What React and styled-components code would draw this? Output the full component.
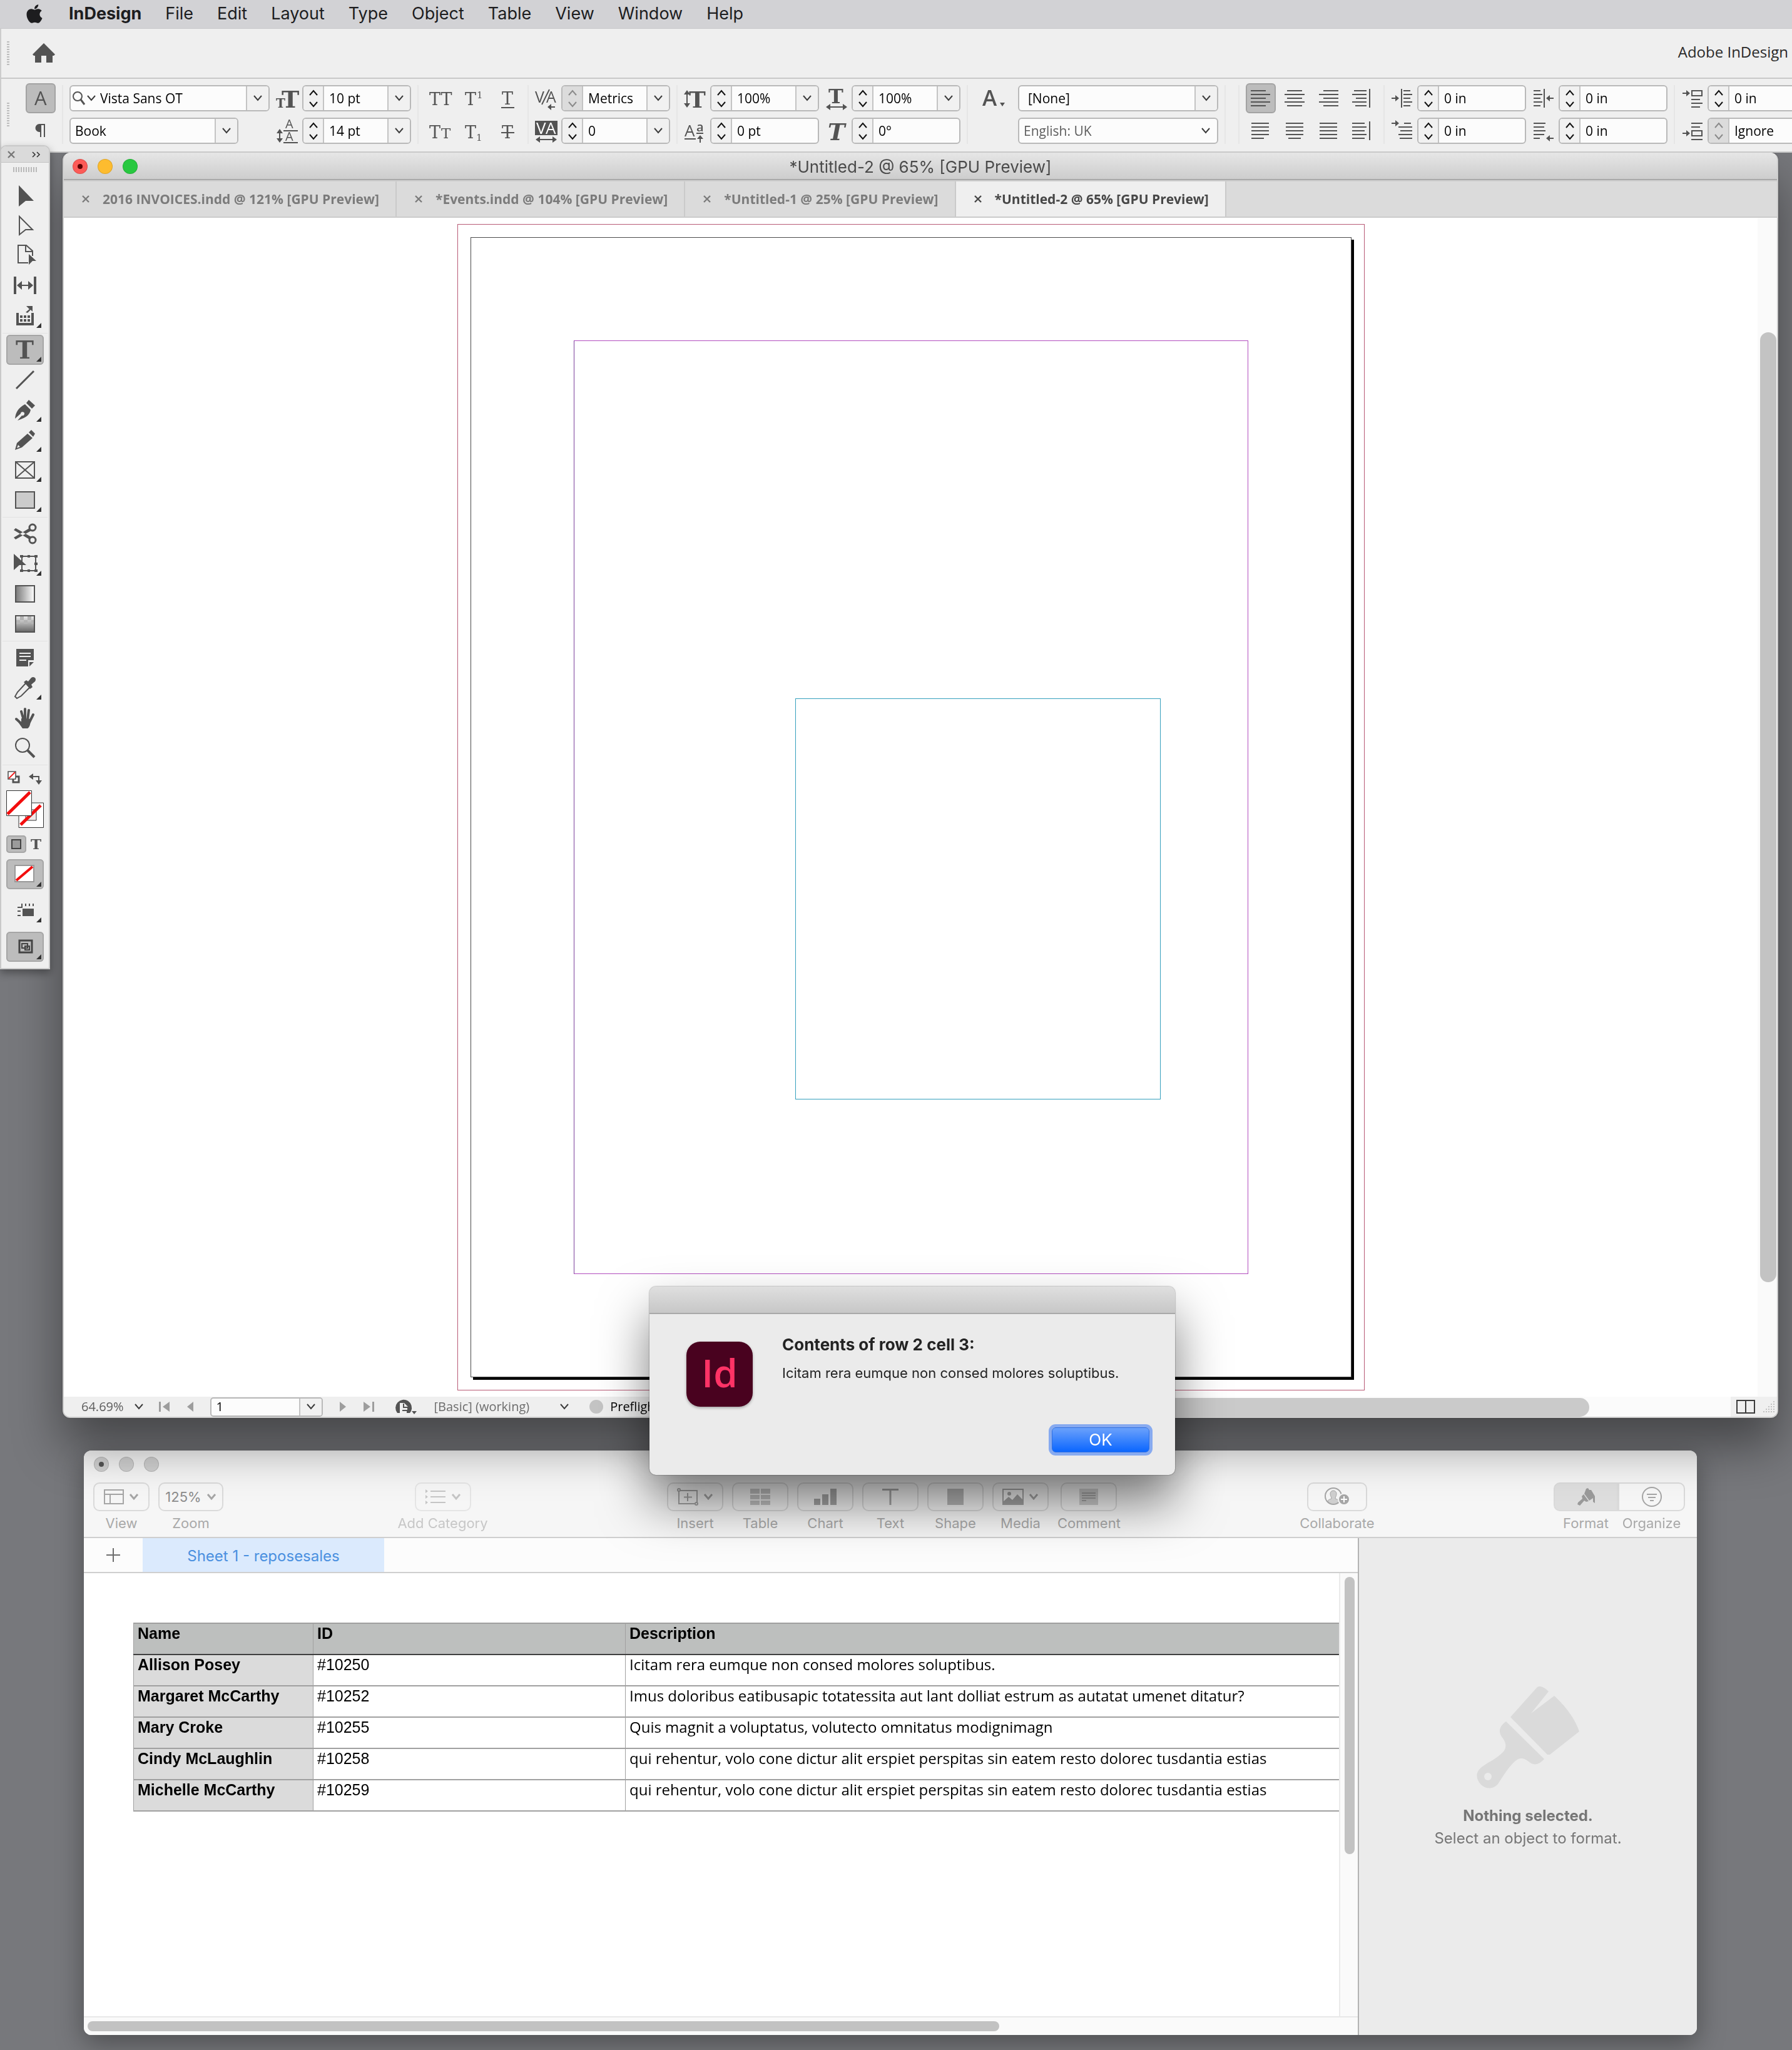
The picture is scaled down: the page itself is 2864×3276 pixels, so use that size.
import React from 'react';
import styled, { createGlobalStyle, css } from 'styled-components';
import { FaApple } from 'react-icons/fa';

const system = 'Inter, "Liberation Sans", sans-serif';
const panelFont = '"Open Sans", "Noto Sans", sans-serif';
const ink = '#535353';

const GlobalStyle = createGlobalStyle`
  *, *::before, *::after { box-sizing: border-box; }
  body { margin: 0; background: #77787c; font-family: ${system}; }
  button, input, select { font: inherit; color: inherit; margin: 0; }
  button { padding: 0; border: 0; background: none; }
  svg { display: block; flex: none; overflow: visible; }
`;

/* ---------- shared bits ---------- */

const Chevron = ({ up, size = 16, color = '#3c3c3c', weight = 2 }) => (
  <svg width={size} height={size * 0.75} viewBox="0 0 16 12" fill="none" stroke={color} strokeWidth={weight}>
    <path d={up ? 'M2 10L8 3L14 10' : 'M2 2L8 9L14 2'} />
  </svg>
);

const Serif = ({ x, y, size, bold, italic, children }) => (
  <text x={x} y={y} fontSize={size} fill={ink} fontFamily="DejaVu Serif, serif"
    fontWeight={bold ? 700 : 400} fontStyle={italic ? 'italic' : 'normal'}>{children}</text>
);

const Sans = ({ x, y, size, fill = ink, weight = 400, children }) => (
  <text x={x} y={y} fontSize={size} fill={fill} fontWeight={weight} fontFamily="Open Sans, sans-serif">{children}</text>
);

const Icon = ({ w = 36, h = 42, children }) => (
  <svg width={w} height={h} viewBox={`0 0 ${w} ${h}`} fill="none" stroke="none">{children}</svg>
);

const Lines = ({ rows }) => (
  <g stroke={ink} strokeWidth="2">
    {rows.map(([x1, x2, y]) => <path key={y} d={`M${x1} ${y}H${x2}`} />)}
  </g>
);

const ArrowRight = ({ x, y }) => (
  <path d={`M${x} ${y - 1}h6v-4l6 5l-6 5v-4h-6z`} fill={ink} />
);

const ArrowLeft = ({ x, y }) => (
  <path d={`M${x + 12} ${y - 1}h-6v-4l-6 5l6 5v-4h6z`} fill={ink} />
);

const UpDown = ({ x, y1, y2 }) => (
  <path d={`M${x} ${y1}l5 7h-4v${y2 - y1 - 14}h4l-5 7l-5 -7h4v-${y2 - y1 - 14}h-4z`} fill={ink} />
);

const LeftRight = ({ y }) => (
  <path d={`M1 ${y}l7 -5v4h20v-4l7 5l-7 5v-4h-20v4z`} fill={ink} />
);

/* ---------- menu bar and control panel ---------- */

const Desktop = styled.div`
  position: relative;
  display: flex;
  flex-direction: column;
  min-height: 100vh;
  overflow: hidden;
  background: #77787c;
`;

const MenuBar = styled.nav`
  display: flex;
  align-items: center;
  gap: 38px;
  height: 46px;
  padding: 0 38px 2px;
  border-bottom: 1px solid #c8c8cb;
  background: #d2d2d5;
  color: #1d1d1f;
`;

const MenuItem = styled.button`
  font-size: 27px;
  line-height: 32px;
  font-weight: ${props => (props.$bold ? 700 : 400)};
`;

const AppBar = styled.header`
  display: flex;
  align-items: center;
  height: 80px;
  padding: 0 6px 0 9px;
  border-left: 2px solid #ccc;
  border-bottom: 2px solid #c9c9c9;
  background: #efefef;
  font: 24px ${panelFont};
  color: #2a2a2a;
`;

const AppName = styled.span`
  margin-left: auto;
  padding-bottom: 6px;
`;

const Grip = styled.span`
  flex: none;
  width: 4px;
  height: 38px;
  background: repeating-linear-gradient(#bdbdbd 0 2px, transparent 2px 4px);
`;

const HomeButton = styled.button`
  margin-left: 37px;
`;

const Panel = styled.section`
  position: relative;
  z-index: 3;
  display: flex;
  align-items: center;
  gap: 10px;
  height: 118px;
  padding: 0 0 2px 9px;
  border-left: 2px solid #ccc;
  border-bottom: 2px solid #c9c9c9;
  background: #efefef;
  overflow: hidden;
  font: 21px/26px ${panelFont};
  color: #000;
`;

const Divider = styled.span`
  flex: none;
  width: 2px;
  height: 94px;
  margin-left: ${props => (props.$wide ? 10 : 0)}px;
  background: #e6e6e6;
`;

const Group = styled.div`
  flex: none;
  display: grid;
  grid-template-columns: ${props => props.$cols};
  grid-template-rows: 42px 42px;
  gap: 10px ${props => props.$gap || 6}px;
  align-items: center;
  justify-items: ${props => props.$justify || 'start'};
  padding: 0 ${props => props.$pad || 0}px;
`;

const ModeGroup = styled(Group)`
  padding-left: 16px;
`;

const IconButton = styled.button`
  display: grid;
  place-items: center;
  width: 48px;
  height: 48px;
  border: 2px solid transparent;
  border-radius: 6px;
  ${props => props.$on && css`
    border-color: #a3a3a3;
    background: #bcbcbc;
  `}
`;

const SmallIconButton = styled(IconButton)`
  width: 38px;
  height: 42px;
`;

const FieldBox = styled.div`
  display: flex;
  width: ${props => props.$width || 174}px;
  height: 42px;
  border: 2px solid #b9b9b9;
  border-radius: 6px;
  background: #fcfcfc;
  overflow: hidden;
`;

const Stepper = styled.div`
  flex: none;
  display: grid;
  grid-template-rows: 1fr 1fr;
  width: 33px;
  border-right: 2px solid #c4c4c4;
  background: ${props => (props.$off ? '#dcdcdc' : '#f1f1f1')};

  button {
    display: grid;
    place-items: center;
  }
`;

const TextInput = styled.input`
  flex: 1;
  min-width: 0;
  padding: 0 8px;
  border: 0;
  outline: 0;
  background: transparent;
`;

const DropButton = styled.button`
  flex: none;
  display: grid;
  place-items: center;
  width: 36px;
  border-left: 2px solid #c4c4c4;
  background: #f1f1f1;
`;

const Field = ({ label, value, off, drop, width }) => (
  <FieldBox $width={width}>
    <Stepper $off={off}>
      <button aria-label={`Increase ${label}`}><Chevron up color={off ? '#8a8a8a' : '#111'} /></button>
      <button aria-label={`Decrease ${label}`}><Chevron color={off ? '#8a8a8a' : '#111'} /></button>
    </Stepper>
    <TextInput aria-label={label} defaultValue={value} />
    {drop && <DropButton aria-label={`${label} options`}><Chevron /></DropButton>}
  </FieldBox>
);

const SelectWrap = styled.div`
  display: grid;
  width: ${props => props.$width}px;
  height: 42px;
  border: 2px solid #b9b9b9;
  border-radius: 6px;
  background: #fcfcfc;
  overflow: hidden;
  color: ${props => (props.$muted ? '#5d5d5d' : '#000')};

  > * { grid-area: 1 / 1; }
`;

const NativeSelect = styled.select`
  appearance: none;
  padding: 0 40px 0 ${props => props.$inset || 7}px;
  border: 0;
  outline: 0;
  background: transparent;
`;

const SelectArrow = styled.span`
  justify-self: end;
  display: grid;
  place-items: center;
  width: 36px;
  pointer-events: none;
  ${props => !props.$plain && css`
    border-left: 2px solid #c4c4c4;
    background: #f1f1f1;
  `}
`;

const SearchMark = styled.span`
  display: flex;
  align-items: center;
  gap: 1px;
  padding-left: 2px;
  pointer-events: none;
`;

const SelectBox = ({ label, value, width, inset, muted, search }) => (
  <SelectWrap $width={width} $muted={muted}>
    <NativeSelect aria-label={label} $inset={inset}><option>{value}</option></NativeSelect>
    {search && (
      <SearchMark>
        <svg width="22" height="24" viewBox="0 0 22 24" fill="none" stroke={ink} strokeWidth="2">
          <circle cx="9" cy="9" r="7" /><path d="M14 14L20 22" strokeWidth="3" />
        </svg>
        <Chevron size={16} />
      </SearchMark>
    )}
    <SelectArrow $plain={muted}><Chevron /></SelectArrow>
  </SelectWrap>
);

const align = {
  left: [[0, 24], [0, 31], [0, 24], [0, 31], [0, 24]],
  center: [[4, 28], [0, 32], [4, 28], [0, 32], [4, 28]],
  right: [[8, 32], [1, 32], [8, 32], [1, 32], [8, 32]],
  spine: [[3, 23], [0, 23], [6, 23], [0, 23], [5, 23]],
  justLeft: [[1, 29], [1, 29], [1, 29], [1, 29], [1, 21]],
  justCenter: [[2, 30], [2, 30], [2, 30], [2, 30], [6, 26]],
  justAll: [[2, 30], [2, 30], [2, 30], [2, 30], [2, 30]],
  away: [[0, 20], [0, 23], [0, 20], [0, 23], [0, 20]],
};

const AlignIcon = ({ kind }) => (
  <Icon w={32} h={32}>
    <Lines rows={align[kind].map(([a, b], i) => [a, b, 4 + i * 6])} />
    {(kind === 'spine' || kind === 'away') && <path d="M28 1V31" stroke={ink} strokeWidth="2" />}
  </Icon>
);

const ControlPanel = () => (
  <Panel>
    <Grip />
    <ModeGroup $cols="48px" $justify="center">
      <IconButton $on aria-label="Character formatting">
        <Icon w={24} h={42}><Sans x={2} y={32} size={31} weight={500}>A</Sans></Icon>
      </IconButton>
      <IconButton aria-label="Paragraph formatting">
        <Icon w={20} h={24}>
          <path d="M17 2H8a5 5 0 0 0 0 11h2V22M16 2V22" stroke={ink} strokeWidth="2" />
          <path d="M10 2H8a5 5 0 0 0 0 11h3V2z" fill={ink} />
        </Icon>
      </IconButton>
    </ModeGroup>
    <Divider />
    <Group $cols="320px">
      <SelectBox label="Font family" value="Vista Sans OT" width={320} inset={47} search />
      <SelectBox label="Font style" value="Book" width={270} />
    </Group>
    <Group $cols="36px 174px">
      <Icon><Serif x={0} y={36} size={20} bold>T</Serif><Serif x={9} y={36} size={38} bold>T</Serif></Icon>
      <Field label="Font size" value="10 pt" drop />
      <Icon>
        <Sans x={15} y={17} size={20}>A</Sans><Sans x={15} y={37} size={20}>A</Sans>
        <path d="M12 21H35M12 40H35" stroke={ink} strokeWidth="2" /><UpDown x={6} y1={18} y2={40} />
      </Icon>
      <Field label="Leading" value="14 pt" drop />
    </Group>
    <Divider />
    <Group $cols="38px 38px 38px" $gap={15} $pad={5} $justify="center">
      <SmallIconButton aria-label="All caps"><Icon w={38}><Serif x={0} y={30} size={27}>TT</Serif></Icon></SmallIconButton>
      <SmallIconButton aria-label="Superscript">
        <Icon w={38}><Serif x={4} y={30} size={27}>T</Serif><Serif x={23} y={19} size={15}>1</Serif></Icon>
      </SmallIconButton>
      <SmallIconButton aria-label="Underline">
        <Icon w={38}><Serif x={10} y={29} size={27}>T</Serif><path d="M9 34H30" stroke={ink} strokeWidth="2" /></Icon>
      </SmallIconButton>
      <SmallIconButton aria-label="Small caps">
        <Icon w={38}><Serif x={0} y={31} size={27}>T</Serif><Serif x={19} y={31} size={23}>T</Serif></Icon>
      </SmallIconButton>
      <SmallIconButton aria-label="Subscript">
        <Icon w={38}><Serif x={4} y={31} size={27}>T</Serif><Serif x={22} y={35} size={15}>1</Serif></Icon>
      </SmallIconButton>
      <SmallIconButton aria-label="Strikethrough">
        <Icon w={38}><Serif x={10} y={31} size={27}>T</Serif><path d="M9 22H30" stroke={ink} strokeWidth="2" /></Icon>
      </SmallIconButton>
    </Group>
    <Divider />
    <Group $cols="36px 174px">
      <Icon>
        <Sans x={0} y={28} size={25}>V</Sans><Sans x={18} y={28} size={25}>A</Sans>
        <path d="M11 31L23 7" stroke={ink} strokeWidth="2" /><ArrowLeft x={20} y={35} />
      </Icon>
      <Field label="Kerning" value="Metrics" off drop />
      <Icon>
        <path d="M0 5H36V28H0z" fill={ink} />
        <Sans x={2} y={26} size={26} fill="#fff">V</Sans><Sans x={17} y={26} size={26} fill="#fff">A</Sans>
        <LeftRight y={35} />
      </Icon>
      <Field label="Tracking" value="0" drop />
    </Group>
    <Divider />
    <Group $cols="36px 174px">
      <Icon><UpDown x={5} y1={8} y2={36} /><Serif x={8} y={36} size={36} bold>T</Serif></Icon>
      <Field label="Vertical scale" value="100%" drop />
      <Icon>
        <Sans x={1} y={30} size={26}>A</Sans><Sans x={20} y={22} size={20} weight={600}>a</Sans>
        <path d="M1 34H19M20 25H31" stroke={ink} strokeWidth="2" />
        <path d="M26 28l5 6h-4v6h-2v-6h-4z" fill={ink} />
      </Icon>
      <Field label="Baseline shift" value="0 pt" />
    </Group>
    <Group $cols="36px 174px">
      <Icon><Serif x={5} y={29} size={32} bold>T</Serif><LeftRight y={35} /></Icon>
      <Field label="Horizontal scale" value="100%" drop />
      <Icon><Serif x={4} y={36} size={37} bold italic>T</Serif></Icon>
      <Field label="Skew" value="0°" />
    </Group>
    <Divider />
    <Group $cols="64px 320px" $justify="start">
      <Icon w={64}><Sans x={13} y={33} size={35} weight={600}>A</Sans><path d="M41 28h8l-4 6z" fill={ink} /></Icon>
      <SelectBox label="Character style" value="[None]" width={320} inset={14} />
      <span />
      <SelectBox label="Language" value="English: UK" width={320} muted />
    </Group>
    <Divider />
    <Divider $wide />
    <Group $cols="48px 48px 48px 48px">
      <IconButton $on aria-label="Align left"><AlignIcon kind="left" /></IconButton>
      <IconButton aria-label="Align center"><AlignIcon kind="center" /></IconButton>
      <IconButton aria-label="Align right"><AlignIcon kind="right" /></IconButton>
      <IconButton aria-label="Align towards spine"><AlignIcon kind="spine" /></IconButton>
      <IconButton aria-label="Justify, last line left"><AlignIcon kind="justLeft" /></IconButton>
      <IconButton aria-label="Justify, last line centered"><AlignIcon kind="justCenter" /></IconButton>
      <IconButton aria-label="Justify all lines"><AlignIcon kind="justAll" /></IconButton>
      <IconButton aria-label="Align away from spine"><AlignIcon kind="away" /></IconButton>
    </Group>
    <Divider />
    <Group $cols="36px 174px">
      <Icon>
        <ArrowRight x={1} y={21} /><path d="M17 6V36" stroke={ink} strokeWidth="2" />
        <Lines rows={[[20, 31, 9], [20, 34, 15], [20, 31, 21], [20, 34, 27], [20, 31, 33]]} />
      </Icon>
      <Field label="Left indent" value="0 in" />
      <Icon>
        <ArrowRight x={1} y={9} />
        <Lines rows={[[21, 32, 9], [12, 34, 15], [15, 34, 21], [12, 34, 27], [14, 34, 33]]} />
      </Icon>
      <Field label="First line indent" value="0 in" />
    </Group>
    <Group $cols="36px 174px">
      <Icon>
        <Lines rows={[[2, 13, 9], [2, 16, 15], [2, 13, 21], [2, 16, 27], [2, 13, 33]]} />
        <path d="M19 6V36" stroke={ink} strokeWidth="2" /><ArrowLeft x={22} y={21} />
      </Icon>
      <Field label="Right indent" value="0 in" />
      <Icon>
        <Lines rows={[[2, 21, 9], [2, 19, 15], [2, 21, 21], [2, 19, 27], [2, 12, 33]]} />
        <ArrowLeft x={22} y={33} />
      </Icon>
      <Field label="Last line right indent" value="0 in" />
    </Group>
    <Divider />
    <Group $cols="36px 174px">
      <Icon>
        <ArrowRight x={2} y={13} /><path d="M17 9H33V17H17z" stroke={ink} strokeWidth="2" />
        <Lines rows={[[16, 30, 23], [16, 34, 29], [16, 30, 35]]} />
      </Icon>
      <Field label="Space before" value="0 in" />
      <Icon>
        <Lines rows={[[16, 34, 9], [16, 30, 15], [16, 34, 35]]} />
        <ArrowRight x={2} y={25} /><path d="M17 21H33V29H17z" stroke={ink} strokeWidth="2" />
      </Icon>
      <Field label="Space between paragraphs" value="Ignore" off />
    </Group>
  </Panel>
);

/* ---------- tool palette ---------- */

const Palette = styled.aside`
  position: absolute;
  z-index: 4;
  top: 232px;
  left: 0;
  width: 80px;
  padding-bottom: 10px;
  border: 2px solid #c9c9c9;
  border-radius: 10px 10px 0 0;
  background: #efefef;
  box-shadow: 0 6px 14px rgba(0, 0, 0, 0.35);
`;

const PaletteHead = styled.div`
  display: flex;
  align-items: center;
  justify-content: space-between;
  height: 26px;
  padding: 0 13px 0 9px;
  border-bottom: 1px solid #c4c4c4;
  border-radius: 8px 8px 0 0;
  background: #dadada;
`;

const PaletteGrip = styled.div`
  width: 38px;
  height: 8px;
  margin: 7px auto 14px;
  background: repeating-linear-gradient(90deg, #b9b9b9 0 2px, transparent 2px 4px);
`;

const Tools = styled.div`
  display: flex;
  flex-direction: column;
  align-items: center;
`;

const ToolButton = styled.button`
  width: 60px;
  height: 48px;
  border-radius: 6px;
  ${props => props.$on && css`
    background: #bcbcbc;
    box-shadow: inset 0 0 0 2px #a6a6a6;
  `}
`;

const ToolRule = styled.span`
  width: 72px;
  height: 1px;
  margin: 3px 0 2px;
  background: #e2e2e2;
`;

const s2 = { fill: 'none', stroke: ink, strokeWidth: 2 };

const toolGroups = [
  [
    { name: 'Selection', art: <path d="M20 7L44 32H31L20 41z" fill={ink} /> },
    { name: 'Direct selection', art: <path d="M21 9L42 30H31L21 38z" {...s2} /> },
    {
      name: 'Page',
      art: <><path d="M35 35H19V7H32L42 16V24M31 7V17H42" {...s2} /><path d="M36 21L48 32H42L36 38z" fill={ink} /></>,
    },
    {
      name: 'Gap',
      art: <><path d="M12 9h4v28h-4zM44 9h4v28h-4z" fill={ink} /><path d="M17 23l8 -7v6h10v-6l8 7l-8 7v-6h-10v6z" fill={ink} /></>,
    },
    {
      name: 'Content collector',
      more: true,
      art: <>
        <path d="M16 19h4v16h20v-16h4v20h-28z" fill={ink} />
        <path d="M22 23h4v4h-4zM28 23h4v4h-4zM34 23h4v4h-4zM22 29h4v4h-4zM28 29h4v4h-4zM34 29h4v4h-4z" fill={ink} />
        <path d="M31 18L37 13L32 8H42V17L39 14L34 19z" fill={ink} />
      </>,
    },
  ],
  [
    { name: 'Type', on: true, more: true, art: <Serif x={15} y={38} size={39} bold>T</Serif> },
    { name: 'Line', art: <path d="M16 38L44 10" fill="none" stroke={ink} strokeWidth="3" /> },
    {
      name: 'Pen',
      more: true,
      art: <>
        <path d="M14 38C15 28 19 21 30 15L39 24C37 34 29 37 18 41L25 33a3 3 0 1 0 -2 -3L14 38z" fill={ink} />
        <path d="M32 13L36 8L46 17L41 22z" fill={ink} />
      </>,
    },
    {
      name: 'Pencil',
      more: true,
      art: <>
        <path d="M14 40L17 29L34 14L42 21L25 36z" fill={ink} /><path d="M17 37L19 32L22 35z" fill="#efefef" />
        <path d="M36 12L40 8L46 14L43 19z" fill={ink} />
      </>,
    },
    { name: 'Rectangle frame', more: true, art: <path d="M15 11H45V37H15zM15 11L45 37M45 11L15 37" {...s2} /> },
    { name: 'Rectangle', more: true, art: <path d="M15 11H45V37H15z" fill="#cbcbcb" stroke={ink} strokeWidth="2" /> },
  ],
  [
    {
      name: 'Scissors',
      art: <>
        <path d="M12 18L15 15L40 29L37 33zM12 30L15 33L40 19L37 15z" fill={ink} />
        <circle cx="42" cy="14" r="5" fill="#efefef" stroke={ink} strokeWidth="3" />
        <circle cx="42" cy="34" r="5" fill="#efefef" stroke={ink} strokeWidth="3" />
      </>,
    },
    {
      name: 'Free transform',
      more: true,
      art: <>
        <path d="M25 12H47V35H25z" {...s2} />
        <path d="M22 10h5v4h-5zM34 10h4v4h-4zM45 10h5v4h-5zM45 22h5v4h-5zM22 33h5v4h-5zM34 33h4v4h-4zM45 33h5v4h-5z" fill={ink} />
        <path d="M12 8L32 26H21L12 34z" fill={ink} />
      </>,
    },
    {
      name: 'Gradient swatch',
      art: <>
        <defs><linearGradient id="swatch"><stop offset="0" stopColor="#777" /><stop offset="1" stopColor="#fff" /></linearGradient></defs>
        <path d="M15 11H45V37H15z" fill="url(#swatch)" stroke={ink} strokeWidth="2" />
      </>,
    },
    {
      name: 'Gradient feather',
      art: <>
        <defs><linearGradient id="feather" x2="0" y2="1"><stop offset="0" stopColor="#eee" /><stop offset="1" stopColor="#666" /></linearGradient></defs>
        <path d="M15 11H45V37H15z" fill="url(#feather)" stroke={ink} strokeWidth="2" />
        <path d="M22 12h6v6h-6zM34 12h6v6h-6zM16 18h6v6h-6zM28 18h6v6h-6zM40 18h4v6h-4z" fill="#b3b3b3" />
      </>,
    },
  ],
  [
    {
      name: 'Note',
      art: <>
        <path d="M16 10H44V28H35V38H16z" fill={ink} /><path d="M44 31V31L37 38V31z" fill={ink} />
        <path d="M21 17H39M21 22H39M21 28H32" stroke="#efefef" strokeWidth="2" />
      </>,
    },
    {
      name: 'Eyedropper',
      more: true,
      art: <>
        <path d="M31 17L18 31L14 38L17 41L24 37L37 24" fill="#efefef" stroke={ink} strokeWidth="2" />
        <path d="M28 15L32 12L35 14L40 8C45 5 49 10 46 14L40 19L42 23L38 26z" fill={ink} />
      </>,
    },
    {
      name: 'Hand',
      art: <>
        <g fill="none" stroke={ink} strokeWidth="4" strokeLinecap="round">
          <path d="M24 14L28 28M30 10V28M36 12L34 28M43 19L37 31M16 26L26 35" />
        </g>
        <path d="M24 25L39 26C39 34 37 40 34 41H26L19 31L24 31z" fill={ink} />
      </>,
    },
    {
      name: 'Zoom',
      art: <>
        <circle cx="26" cy="20" r="11" fill="none" stroke={ink} strokeWidth="2" />
        <path d="M34 28L45 39" fill="none" stroke={ink} strokeWidth="4" />
      </>,
    },
  ],
];

const Tool = ({ tool }) => (
  <ToolButton $on={tool.on} aria-label={tool.name}>
    <svg width="60" height="48" viewBox="0 0 60 48">
      {tool.art}
      {tool.more && <path d="M56 35V43H48z" fill="#333" />}
    </svg>
  </ToolButton>
);

const SwapRow = styled.div`
  display: flex;
  justify-content: space-between;
  width: 60px;
  height: 38px;
  padding: 7px 2px 0;
`;

const ColorProxy = styled.div`
  height: 60px;
`;

const ApplyRow = styled.div`
  display: flex;
  align-items: center;
  gap: 6px;
  width: 60px;
  height: 28px;
  margin: 12px 0 10px;
`;

const ApplyButton = styled.button`
  display: grid;
  place-items: center;
  width: ${props => (props.$on ? 32 : 20)}px;
  height: 28px;
  border-radius: 5px;
  ${props => props.$on && css`
    background: #bcbcbc;
    box-shadow: inset 0 0 0 2px #a6a6a6;
  `}
`;

const ModeButton = styled(ToolButton)`
  margin-bottom: 10px;
  &:last-child { margin-bottom: 0; }
`;

const ToolPalette = () => (
  <Palette>
    <PaletteHead>
      <svg width="14" height="14" viewBox="0 0 14 14" stroke="#777" strokeWidth="2.4"><path d="M2 2L12 12M12 2L2 12" /></svg>
      <svg width="14" height="10" viewBox="0 0 14 10" fill="none" stroke="#333" strokeWidth="1.6"><path d="M1 1L5 5L1 9M8 1L12 5L8 9" /></svg>
    </PaletteHead>
    <PaletteGrip />
    <Tools>
      {toolGroups.map((group, i) => (
        <React.Fragment key={i}>
          {group.map(tool => <Tool key={tool.name} tool={tool} />)}
          <ToolRule />
        </React.Fragment>
      ))}
      <SwapRow>
        <svg width="20" height="20" viewBox="0 0 20 20">
          <path d="M9 9H18V18H9z" fill="#fff" stroke={ink} strokeWidth="3" />
          <path d="M1 1H13V13H1z" fill="#fff" stroke={ink} strokeWidth="1.6" /><path d="M2 12L12 2" stroke="#e22" strokeWidth="2" />
        </svg>
        <svg width="22" height="24" viewBox="0 0 22 24">
          <path d="M6 9H16V16" fill="none" stroke={ink} strokeWidth="2" />
          <path d="M0 9L7 4V14zM11 15H21L16 22z" fill={ink} />
        </svg>
      </SwapRow>
      <ColorProxy>
        <svg width="60" height="60" viewBox="0 0 60 60">
          <path d="M20 20H59.500V59.500H20z" fill="#fff" stroke="#333" />
          <path d="M31 31H48V48H31z" fill="#efe9ea" stroke="#333" />
          <path d="M23 55L55 24" stroke="#f20d0d" strokeWidth="5" />
          <path d="M.5 .5H40.500V40.500H.5z" fill="#fff" stroke="#333" />
          <path d="M2 38L38 3" stroke="#f20d0d" strokeWidth="5" />
        </svg>
      </ColorProxy>
      <ApplyRow>
        <ApplyButton $on aria-label="Formatting affects container">
          <svg width="16" height="16" viewBox="0 0 16 16"><path d="M1 1H15V15H1z" fill="#9b9b9b" stroke="#444" strokeWidth="2" /></svg>
        </ApplyButton>
        <ApplyButton aria-label="Formatting affects text">
          <svg width="18" height="20" viewBox="0 0 18 20"><Serif x={0} y={18} size={23} bold>T</Serif></svg>
        </ApplyButton>
      </ApplyRow>
      <ModeButton $on aria-label="Apply none">
        <svg width="60" height="48" viewBox="0 0 60 48">
          <path d="M14 10H44V36H14z" fill="#fff" stroke="#999" strokeWidth="2" />
          <path d="M16 34L42 12" stroke="#f20d0d" strokeWidth="4" />
          <path d="M56 36V44H48z" fill="#333" />
        </svg>
      </ModeButton>
      <ModeButton aria-label="View options">
        <svg width="60" height="48" viewBox="0 0 60 48">
          <path d="M26 21H44V33H26z" fill={ink} />
          <path d="M18 19H25V13M18 25H23M18 32H23M31 13V17M37 13V17M43 13V17" {...s2} />
          <path d="M56 35V43H48z" fill="#333" />
        </svg>
      </ModeButton>
      <ModeButton $on aria-label="Screen mode">
        <svg width="60" height="48" viewBox="0 0 60 48">
          <path d="M21 14H41V33H21z" fill="none" stroke="#444" strokeWidth="3" />
          <path d="M25 19H34V26H25zM30 23H37V29H30z" fill="#bcbcbc" stroke="#444" strokeWidth="2" />
          <path d="M56 36V44H48z" fill="#333" />
        </svg>
      </ModeButton>
    </Tools>
  </Palette>
);

/* ---------- document window ---------- */

const DocWindow = styled.section`
  position: relative;
  z-index: 2;
  margin: 0 22px 0 100px;
  border: solid #cbcbcb;
  border-width: 0 2px 2px;
  border-radius: 12px;
  background: #fff;
  box-shadow: 0 44px 80px rgba(0, 0, 0, 0.42), 0 0 2px rgba(0, 0, 0, 0.5);
`;

const TitleBar = styled.div`
  display: grid;
  grid-template-columns: 1fr auto 1fr;
  align-items: center;
  height: 44px;
  padding: 2px 14px 0;
  border-bottom: 2px solid #a9a9a9;
  border-radius: 12px 12px 0 0;
  background: linear-gradient(#e6e6e6, #cdcdcd);
  font-size: 26px;
  color: #4a4a4a;
`;

const Lights = styled.div`
  display: flex;
  gap: 16px;
`;

const Light = styled.button`
  display: grid;
  place-items: center;
  width: 24px;
  height: 24px;
  border: 1px solid rgba(0, 0, 0, 0.12);
  border-radius: 50%;
  background: ${props => props.$color};

  &::after {
    content: '';
    width: 8px;
    height: 8px;
    border-radius: 50%;
    background: ${props => props.$dot || 'transparent'};
  }
`;

const TabStrip = styled.div`
  display: flex;
  height: 60px;
  border-top: 2px solid #d0d0d0;
  border-bottom: 2px solid #cbcbcb;
  background: #dbdbdb;
`;

const Tab = styled.div`
  display: flex;
  align-items: center;
  gap: 20px;
  padding: 0 26px 0 28px;
  border-right: 2px solid #cacaca;
  font: 700 21px/28px ${panelFont};
  color: ${props => (props.$active ? '#474747' : '#7b7b7b')};
  ${props => props.$active && css`background: #efefef;`}
`;

const CloseTab = styled.button`
  padding: 1px;
`;

const Pasteboard = styled.div`
  display: flex;
  background: #fff;
`;

const Spread = styled.div`
  flex: 1;
  display: flex;
  justify-content: center;
  padding: 10px 0;
`;

const Bleed = styled.div`
  width: 1450px;
  padding: 20px;
  border: 1px solid #b85a75;
`;

const Sheet = styled.div`
  height: 1822px;
  padding: 164px;
  border: 1px solid #4a4a4a;
  background: #fff;
  box-shadow: 4px 4px 0 #000;
`;

const Margins = styled.div`
  height: 100%;
  border: 1px solid #b24cbe;
  border-left-color: #7b3f9b;
`;

const TextFrame = styled.div`
  width: 584px;
  height: 641px;
  margin: 571px 0 0 353px;
  border: 1px solid #35a0bd;
`;

const TrackY = styled.div`
  width: 31px;
  padding: 183px 1px 183px 4px;
  background: #fafafa;
`;

const ThumbY = styled.div`
  height: 1518px;
  border-radius: 13px;
  background: #c3c3c3;
`;

const StatusBar = styled.footer`
  display: flex;
  align-items: center;
  height: 32px;
  border-radius: 0 0 10px 10px;
  background: #efefef;
  overflow: hidden;
  font: 20px/26px ${panelFont};
  color: #5d5d5d;
`;

const ZoomLevel = styled.button`
  display: flex;
  align-items: center;
  gap: 16px;
  margin: 0 24px 0 28px;
`;

const PageNav = styled.div`
  display: flex;
  align-items: center;
  gap: 26px;
`;

const PageBox = styled(FieldBox)`
  width: 180px;
  height: 31px;
  border-radius: 5px;
  color: #000;
`;

const Preflight = styled.div`
  display: flex;
  align-items: center;
  margin-left: 32px;
`;

const Profile = styled.button`
  display: flex;
  align-items: center;
  gap: 48px;
  margin: 0 32px 0 28px;
  color: #6c6c6c;
`;

const PreflightState = styled.button`
  display: flex;
  align-items: center;
  gap: 11px;
  width: 320px;
  color: #000;
`;

const Dot = styled.span`
  width: 22px;
  height: 22px;
  border-radius: 50%;
  background: #c4c4c4;
`;

const TrackX = styled.div`
  flex: 1;
  align-self: stretch;
  padding: 2px 226px 0 0;
  background: #fbfbfb;
`;

const ThumbX = styled.div`
  height: 30px;
  border-radius: 15px;
  background: #cacaca;
`;

const Corner = styled.div`
  display: flex;
  align-items: flex-end;
  gap: 11px;
  padding: 0 4px 0 9px;
`;

const tabs = ['2016 INVOICES.indd @ 121% [GPU Preview]', '*Events.indd @ 104% [GPU Preview]', '*Untitled-1 @ 25% [GPU Preview]', '*Untitled-2 @ 65% [GPU Preview]'];

const DocumentWindow = () => (
  <DocWindow>
    <TitleBar>
      <Lights>
        <Light $color="#fc5b57" $dot="#5c0002" aria-label="Close" />
        <Light $color="#fdbc2f" aria-label="Minimize" />
        <Light $color="#28c840" aria-label="Full screen" />
      </Lights>
      <span>*Untitled-2 @ 65% [GPU Preview]</span>
    </TitleBar>
    <TabStrip>
      {tabs.map((title, i) => (
        <Tab key={title} $active={i === 3}>
          <CloseTab aria-label="Close tab">
            <svg width="12" height="12" viewBox="0 0 12 12" stroke="currentColor" strokeWidth="2.4"><path d="M1 1L11 11M11 1L1 11" /></svg>
          </CloseTab>
          {title}
        </Tab>
      ))}
    </TabStrip>
    <Pasteboard>
      <Spread>
        <Bleed>
          <Sheet><Margins><TextFrame /></Margins></Sheet>
        </Bleed>
      </Spread>
      <TrackY><ThumbY /></TrackY>
    </Pasteboard>
    <StatusBar>
      <ZoomLevel>64.69% <Chevron /></ZoomLevel>
      <PageNav>
        <button aria-label="First page"><svg width="18" height="16" viewBox="0 0 18 16" fill="#9d9d9d"><path d="M0 0h3v16h-3zM17 0v16L6 8z" /></svg></button>
        <button aria-label="Previous page"><svg width="12" height="16" viewBox="0 0 12 16" fill="#9d9d9d"><path d="M11 0v16L1 8z" /></svg></button>
        <PageBox>
          <TextInput aria-label="Page" defaultValue="1" />
          <DropButton aria-label="Pages"><Chevron /></DropButton>
        </PageBox>
        <button aria-label="Next page"><svg width="12" height="16" viewBox="0 0 12 16" fill="#9d9d9d"><path d="M1 0v16L11 8z" /></svg></button>
        <button aria-label="Last page"><svg width="18" height="16" viewBox="0 0 18 16" fill="#9d9d9d"><path d="M15 0h3v16h-3zM1 0v16L12 8z" /></svg></button>
      </PageNav>
      <Preflight>
        <svg width="36" height="26" viewBox="0 0 36 26">
          <path d="M5 23A13 13 0 1 1 27 20L25 23H20V12L15 7H9V23z" fill={ink} />
          <path d="M10 23V7H16L22 13V19H13" fill="#efefef" />
          <path d="M15 8V14H22V19H13" fill="none" stroke={ink} strokeWidth="2" />
          <path d="M28 20h8l-4 5z" fill={ink} />
        </svg>
        <Profile>[Basic] (working) <Chevron /></Profile>
        <PreflightState><Dot /> Preflight off</PreflightState>
      </Preflight>
      <TrackX><ThumbX /></TrackX>
      <Corner>
        <svg width="30" height="22" viewBox="0 0 30 22" fill="none" stroke="#3c3c3c" strokeWidth="2"><path d="M1 1H29V21H1zM15 1V21" /></svg>
        <svg width="20" height="20" viewBox="0 0 20 20" stroke="#c2c2c2" strokeWidth="2" strokeDasharray="2 2">
          <path d="M18 1H20M14 5H20M10 9H20M6 13H20M2 17H20" />
        </svg>
      </Corner>
    </StatusBar>
  </DocWindow>
);

/* ---------- spreadsheet window ---------- */

const SheetWindow = styled.section`
  position: relative;
  z-index: 1;
  flex: 1;
  display: flex;
  flex-direction: column;
  margin: 52px 152px 24px 134px;
  border-radius: 12px;
  background: #fff;
  overflow: hidden;
`;

const SheetShadow = styled.div`
  display: flex;
  flex: 1;
  filter: drop-shadow(0 14px 22px rgba(0, 0, 0, 0.35));
`;

const SheetTitle = styled.div`
  display: flex;
  align-items: center;
  height: 44px;
  padding: 0 16px;
  background: #f6f6f6;
`;

const Toolbar = styled.div`
  display: flex;
  justify-content: space-between;
  height: 96px;
  padding: 7px 19px 0 15px;
  border-bottom: 2px solid #cfcfcf;
  background: #f6f6f6;
  font-size: 22px;
  line-height: 28px;
  color: #a9a9a9;
`;

const ToolSet = styled.div`
  display: flex;
  gap: 14px;
`;

const SheetTool = styled.button`
  display: flex;
  flex-direction: column;
  align-items: center;
  gap: 5px;
`;

const CategoryTool = styled(SheetTool)`
  margin-left: -8px;
  opacity: 0.6;
`;

const Cap = styled.span`
  display: flex;
  align-items: center;
  justify-content: center;
  gap: 8px;
  width: ${props => props.$width || 90}px;
  height: 46px;
  border: 2px solid #dadada;
  border-radius: ${props => props.$corners || '10px'};
  background: ${props => (props.$on ? '#dedede' : 'transparent')};
  color: #8c8c8c;
`;

const Pair = styled(ToolSet)`
  gap: 0;
`;

const SheetBody = styled.div`
  flex: 1;
  display: flex;
`;

const Main = styled.div`
  flex: 1;
  min-width: 0;
  display: flex;
  flex-direction: column;
`;

const SheetTabs = styled.div`
  display: flex;
  height: 56px;
  border-bottom: 2px solid #cfcfcf;
  background: #fcfcfc;
`;

const AddSheet = styled.button`
  display: grid;
  place-items: center;
  width: 94px;
`;

const SheetTab = styled.button`
  width: 386px;
  padding-top: 2px;
  background: #dbeafd;
  font-size: 24px;
  color: #4a90e0;
`;

const Grid = styled.div`
  flex: 1;
  display: grid;
  grid-template-columns: 1fr 30px;
  grid-template-rows: 1fr 30px;
`;

const Cells = styled.div`
  min-width: 0;
  padding: 79px 0 0 79px;
  overflow: hidden;
`;

const Table = styled.table`
  width: 2200px;
  table-layout: fixed;
  border-collapse: collapse;
  font: 25px/28px "Liberation Sans", Arial, sans-serif;
  color: #000;

  tr { height: 50px; }

  th, td {
    padding: 1px 6px;
    border: 1px solid #a0a0a0;
    border-width: 2px 1px;
    text-align: left;
    vertical-align: top;
  }

  thead th {
    background: #bdbfbe;
    border-bottom-color: #3f3f3f;
  }

  tbody th { background: #dbdbdb; }
  td:last-child { font: 24px/28px "Open Sans", "Noto Sans", sans-serif; }
`;

const ScrollY = styled.div`
  padding: 6px 5px 0 7px;
  border-left: 2px solid #ebebeb;
  background: #fafafa;
`;

const ScrollX = styled.div`
  grid-column: 1 / -1;
  padding: 6px 0 0 6px;
  border-top: 2px solid #e8e8e8;
  background: #fafafa;
`;

const Thumb = styled.div`
  width: ${props => props.$w};
  height: ${props => props.$h};
  border-radius: 8px;
  background: #c2c2c2;
`;

const Inspector = styled.aside`
  display: flex;
  flex-direction: column;
  align-items: center;
  width: 542px;
  padding-top: 236px;
  border-left: 2px solid #b3b3b3;
  background: #ebebeb;
  font-size: 24px;
  line-height: 36px;
  color: #767676;
`;

const BrushArt = styled.svg`
  margin-bottom: 26px;
`;

const people = [
  ['Allison Posey', '#10250', 'Icitam rera eumque non consed molores soluptibus.'],
  ['Margaret McCarthy', '#10252', 'Imus doloribus eatibusapic totatessita aut lant dolliat estrum as autatat umenet ditatur?'],
  ['Mary Croke', '#10255', 'Quis magnit a voluptatus, volutecto omnitatus modignimagn'],
  ['Cindy McLaughlin', '#10258', 'qui rehentur, volo cone dictur alit erspiet perspitas sin eatem resto dolorec tusdantia estias'],
  ['Michelle McCarthy', '#10259', 'qui rehentur, volo cone dictur alit erspiet perspitas sin eatem resto dolorec tusdantia estias'],
];

const Small = ({ w = 34, h = 28, children }) => (
  <svg width={w} height={h} viewBox={`0 0 ${w} ${h}`} fill="none" stroke="#a6a6a6" strokeWidth="2">{children}</svg>
);

const grayChevron = <Chevron size={16} color="#a6a6a6" weight={3} />;

const insertTools = [
  ['Insert', <><Small><path d="M3 4H32V25H3z" /><path d="M17 8V21M11 14.500H24" /><circle cx="3" cy="3" r="2" fill="#fff" /><circle cx="31" cy="25" r="2" fill="#fff" /></Small>{grayChevron}</>],
  ['Table', <Small><path d="M1 1H16V9H1zM18 1H33V9H18zM1 11H16V18H1zM18 11H33V18H18zM1 20H16V27H1zM18 20H33V27H18z" fill="#c4c4c4" stroke="none" /></Small>],
  ['Chart', <Small w={36}><path d="M0 17h10v10h-10zM13 10h10v17h-10zM26 1h10v26h-10z" fill="#a6a6a6" stroke="none" /></Small>],
  ['Text', <Small w={26}><path d="M0 2.500H26M13 2V27" strokeWidth="3" /></Small>],
  ['Shape', <Small w={26}><path d="M0 1H26V27H0z" fill="#b9b9b9" stroke="none" /></Small>],
  ['Media', <><Small><path d="M1 2H33V26H1z" /><path d="M2 25V21L10 14L16 19L24 10L32 18V25z" fill="#a6a6a6" stroke="none" /><circle cx="11" cy="9" r="3" fill="#a6a6a6" stroke="none" /></Small>{grayChevron}</>],
  ['Comment', <Small w={32}><path d="M1 1H31V27H1z" fill="#cfcfcf" stroke="none" /><path d="M5 8H27M5 12H27M5 16H27M5 20H12" /></Small>],
];

const SpreadsheetWindow = () => (
  <SheetShadow>
    <SheetWindow>
      <SheetTitle>
        <Lights>
          <Light $color="#d2d2d2" $dot="#555" aria-label="Close" />
          <Light $color="#d2d2d2" aria-label="Minimize" />
          <Light $color="#d2d2d2" aria-label="Full screen" />
        </Lights>
      </SheetTitle>
      <Toolbar>
        <ToolSet>
          <SheetTool>
            <Cap><Small w={32} h={24}><path d="M1 1H31V23H1zM1 8H31M10 8V23" /></Small>{grayChevron}</Cap>
            View
          </SheetTool>
          <SheetTool><Cap $width={104}>125%{grayChevron}</Cap>Zoom</SheetTool>
        </ToolSet>
        <CategoryTool>
          <Cap><Small w={34} h={24}><path d="M9 3H33M9 12H33M9 21H33" /><path d="M1 0l4 3l-4 3zM1 9l4 3l-4 3zM1 18l4 3l-4 3z" fill="#a6a6a6" stroke="none" /></Small>{grayChevron}</Cap>
          Add Category
        </CategoryTool>
        <ToolSet>
          {insertTools.map(([name, art]) => <SheetTool key={name}><Cap>{art}</Cap>{name}</SheetTool>)}
        </ToolSet>
        <SheetTool>
          <Cap $width={96}>
            <Small w={40} h={30}>
              <circle cx="14" cy="14" r="13" />
              <path d="M9 10a5 5 0 0 1 10 0c0 4 -2 5 -2 8c3 1 6 2 6 4c-5 6 -13 6 -18 0c0 -2 3 -3 6 -4c0 -3 -2 -4 -2 -8z" fill="#cfcfcf" strokeWidth="1" />
              <circle cx="31" cy="19" r="9" fill="#a6a6a6" stroke="#f6f6f6" />
              <path d="M31 14V24M26 19H36" stroke="#fff" />
            </Small>
          </Cap>
          Collaborate
        </SheetTool>
        <Pair>
          <SheetTool>
            <Cap $width={103} $on $corners="10px 0 0 10px">
              <Small w={30} h={28}>
                <path d="M15 1L18 0L20 3L23 3L29 13V24L26 22V16L20 20L12 9zM11 10L19 21L15 22L12 20L5 28L1 26L2 23L9 17L8 13z" fill="#9a9a9a" stroke="none" />
              </Small>
            </Cap>
            Format
          </SheetTool>
          <SheetTool>
            <Cap $width={107} $corners="0 10px 10px 0">
              <Small w={32} h={32}><circle cx="16" cy="16" r="15" /><path d="M8 12H24M10 17H22M13 22H19" /></Small>
            </Cap>
            Organize
          </SheetTool>
        </Pair>
      </Toolbar>
      <SheetBody>
        <Main>
          <SheetTabs>
            <AddSheet aria-label="Add sheet">
              <svg width="24" height="24" viewBox="0 0 24 24" stroke="#6d6d6d" strokeWidth="2"><path d="M12 1V23M1 12H23" /></svg>
            </AddSheet>
            <SheetTab>Sheet 1 - reposesales</SheetTab>
          </SheetTabs>
          <Grid>
            <Cells>
              <Table>
                <colgroup><col width="287" /><col width="499" /><col /></colgroup>
                <thead><tr><th scope="col">Name</th><th scope="col">ID</th><th scope="col">Description</th></tr></thead>
                <tbody>
                  {people.map(([name, id, text]) => (
                    <tr key={id}><th scope="row">{name}</th><td>{id}</td><td>{text}</td></tr>
                  ))}
                </tbody>
              </Table>
            </Cells>
            <ScrollY><Thumb $w="16px" $h="443px" /></ScrollY>
            <ScrollX><Thumb $w="1457px" $h="16px" /></ScrollX>
          </Grid>
        </Main>
        <Inspector>
          <BrushArt width="164" height="164" viewBox="0 0 164 164" fill="#dadada">
            <path d="M54 50L96 3C101 -2 109 3 115 9L87 44L124 16C145 35 158 55 164 73L117 110H113z" />
            <path d="M47 57L108 117C98 128 90 127 83 121C75 115 69 114 62 120C51 129 42 145 34 157C26 166 14 165 7 158C-2 148 -2 138 8 130C18 122 30 118 41 107C48 101 48 92 42 84C35 76 34 66 47 57z" />
            <circle cx="18" cy="145" r="6" fill="#ebebeb" />
          </BrushArt>
          <b>Nothing selected.</b>
          <span>Select an object to format.</span>
        </Inspector>
      </SheetBody>
    </SheetWindow>
  </SheetShadow>
);

/* ---------- alert ---------- */

const Alert = styled.div`
  position: absolute;
  z-index: 5;
  top: 2056px;
  left: 1038px;
  width: 840px;
  border-radius: 10px;
  background: #ebebeb;
  box-shadow: 0 44px 80px rgba(0, 0, 0, 0.5), 0 0 2px rgba(0, 0, 0, 0.6);
`;

const AlertBar = styled.div`
  height: 44px;
  border-bottom: 2px solid #a9a9a9;
  border-radius: 10px 10px 0 0;
  background: linear-gradient(#dfdfdf, #c7c7c7);
`;

const AlertBody = styled.div`
  display: grid;
  grid-template-columns: 106px 1fr;
  gap: 0 47px;
  padding: 32px 41px 36px 59px;
  color: #232323;
`;

const AppIcon = styled.div`
  width: 106px;
  height: 104px;
  margin-top: 12px;
  border-radius: 22px;
  background: #49021f;
  box-shadow: 0 2px 4px rgba(0, 0, 0, 0.3);
  font: 600 62px/98px "Open Sans", sans-serif;
  text-align: center;
  color: #ff3366;
`;

const AlertHeading = styled.h2`
  margin: 0 0 14px;
  font-size: 26px;
  line-height: 34px;
`;

const AlertText = styled.p`
  margin: 0;
  font-size: 22px;
  line-height: 28px;
`;

const OkButton = styled.button`
  grid-column: 2;
  justify-self: end;
  width: 156px;
  height: 40px;
  margin-top: 33px;
  border: 1px solid #2f6fe0;
  border-radius: 6px;
  background: linear-gradient(#6ba1fb, #0a66ff);
  box-shadow: 0 0 0 5px #87aaf0;
  font-size: 26px;
  line-height: 32px;
  color: #fff;
`;

const App = () => (
  <Desktop>
    <GlobalStyle />
    <MenuBar>
      <FaApple size={34} />
      {['InDesign', 'File', 'Edit', 'Layout', 'Type', 'Object', 'Table', 'View', 'Window', 'Help'].map((item, i) => (
        <MenuItem key={item} $bold={i === 0}>{item}</MenuItem>
      ))}
    </MenuBar>
    <AppBar>
      <Grip />
      <HomeButton aria-label="Home">
        <svg width="36" height="32" viewBox="0 0 36 32" fill={ink}><path d="M18 0L36 18L34 20H32V31H22V20H14V31H4V20H2L0 18z" /></svg>
      </HomeButton>
      <AppName>Adobe InDesign</AppName>
    </AppBar>
    <ControlPanel />
    <ToolPalette />
    <DocumentWindow />
    <SpreadsheetWindow />
    <Alert role="alertdialog" aria-labelledby="alert-title">
      <AlertBar />
      <AlertBody>
        <AppIcon>Id</AppIcon>
        <div>
          <AlertHeading id="alert-title">Contents of row 2 cell 3:</AlertHeading>
          <AlertText>Icitam rera eumque non consed molores soluptibus.</AlertText>
        </div>
        <OkButton>OK</OkButton>
      </AlertBody>
    </Alert>
  </Desktop>
);

export default App;
